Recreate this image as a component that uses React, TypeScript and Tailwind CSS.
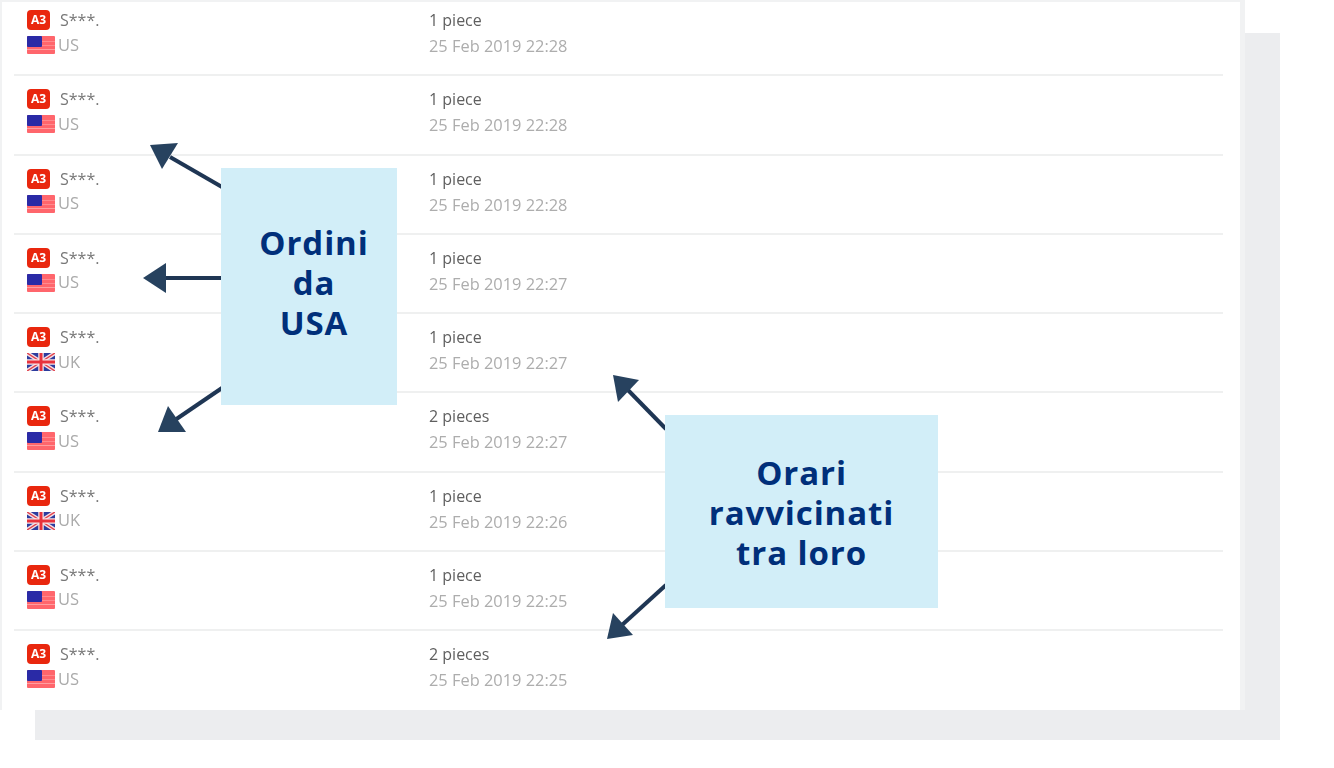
const rows = [
  { flag: "US", qty: "1 piece", time: "25 Feb 2019 22:28" },
  { flag: "US", qty: "1 piece", time: "25 Feb 2019 22:28" },
  { flag: "US", qty: "1 piece", time: "25 Feb 2019 22:28" },
  { flag: "US", qty: "1 piece", time: "25 Feb 2019 22:27" },
  { flag: "UK", qty: "1 piece", time: "25 Feb 2019 22:27" },
  { flag: "US", qty: "2 pieces", time: "25 Feb 2019 22:27" },
  { flag: "UK", qty: "1 piece", time: "25 Feb 2019 22:26" },
  { flag: "US", qty: "1 piece", time: "25 Feb 2019 22:25" },
  { flag: "US", qty: "2 pieces", time: "25 Feb 2019 22:25" },
];

function FlagUS() {
  return (
    <svg width="28" height="18" viewBox="0 0 28 18" className="shrink-0">
      <rect width="28" height="18" rx="1" fill="#ff666c" />
      <rect y="5" width="28" height="1" fill="#ff8a8e" />
      <rect y="9" width="28" height="1" fill="#ff8a8e" />
      <rect y="13" width="28" height="1" fill="#ff9ea0" />
      <rect width="15" height="11" rx="1" fill="#2a2aa6" />
    </svg>
  );
}

function FlagUK() {
  return (
    <svg width="28" height="18" viewBox="0 0 28 18" className="shrink-0">
      <rect width="28" height="18" rx="1" fill="#2c3c9e" />
      <path d="M0 0L28 18M28 0L0 18" stroke="#f4dfe4" strokeWidth="4" />
      <path d="M0 0L28 18M28 0L0 18" stroke="#e0404c" strokeWidth="1.4" />
      <path d="M14 0V18M0 9H28" stroke="#f8e4e6" strokeWidth="5.5" />
      <path d="M14 0V18M0 9H28" stroke="#e8323c" strokeWidth="3" />
    </svg>
  );
}

function Arrow({ x1, y1, x2, y2, head }: { x1: number; y1: number; x2: number; y2: number; head: string }) {
  return (
    <g>
      <line x1={x1} y1={y1} x2={x2} y2={y2} stroke="#1f3654" strokeWidth="4" />
      <polygon points={head} fill="#27425f" />
    </g>
  );
}

function Callout({ className, lines }: { className: string; lines: string[] }) {
  return (
    <div
      className={`absolute flex flex-col items-center justify-center bg-[#d2eef8] font-['Open_Sans',sans-serif] text-[33px] leading-[40px] font-bold tracking-[0.9px] text-[#002f7a] ${className}`}
    >
      {lines.map((l) => (
        <div key={l}>{l}</div>
      ))}
    </div>
  );
}

export default function App() {
  return (
    <div className="relative h-[768px] w-[1334px] overflow-hidden bg-white font-['Open_Sans',sans-serif]">
      <div className="absolute top-[33px] left-[35px] h-[707px] w-[1245px] bg-[#ecedef]" />
      <div className="relative h-[710px] w-[1245px] overflow-hidden border-t-2 border-r-[5px] border-l-2 border-[#f1f2f3] bg-white">
        <div className="mt-[-5px] flex flex-col pl-3 blur-[0.6px]">
          {rows.map((r, i) => (
            <div
              key={i}
              className={`flex h-[79.25px] w-[1209px] items-start pt-[13px] pl-[13px] ${i < rows.length - 1 ? "border-b-2 border-[#eff0f0]" : ""}`}
            >
              <div className="flex w-[402px] flex-col gap-[6px]">
                <div className="flex h-5 items-center gap-[10px]">
                  <div className="flex h-5 w-[23px] items-center justify-center rounded-[4px] bg-[#e9270e] text-[12px] font-bold text-white">
                    A3
                  </div>
                  <span className="text-[16px] text-[#777777]">S***.</span>
                </div>
                <div className="flex h-[18px] items-center gap-[3px]">
                  {r.flag === "US" ? <FlagUS /> : <FlagUK />}
                  <span className="text-[16.5px] text-[#aaaaaa]">{r.flag}</span>
                </div>
              </div>
              <div className="flex flex-col gap-[6px]">
                <div className="h-5 text-[16px] leading-5 text-[#5f5f5f]">{r.qty}</div>
                <div className="h-5 text-[16.4px] leading-5 text-[#adadad]">{r.time}</div>
              </div>
            </div>
          ))}
        </div>
      </div>
      <svg className="absolute top-0 left-0" width="1334" height="768" viewBox="0 0 1334 768">
        <Arrow x1={222} y1={187} x2={170} y2={157} head="150,145 178,143 162,169" />
        <Arrow x1={222} y1={278} x2={160} y2={278} head="143,278 166,263 166,293" />
        <Arrow x1={222} y1={388} x2={175} y2={420} head="158,432 186,432 168,406" />
        <Arrow x1={666} y1={429} x2={625} y2={387} head="613,375 639,380 618,402" />
        <Arrow x1={666} y1={585} x2={622} y2={625} head="607,639 633,635 613,613" />
      </svg>
      <Callout className="top-[168px] left-[221px] h-[237px] w-[176px] pb-[8px] pl-[10px]" lines={["Ordini", "da", "USA"]} />
      <Callout className="top-[415px] left-[665px] h-[193px] w-[273px] pt-[3px]" lines={["Orari", "ravvicinati", "tra loro"]} />
    </div>
  );
}
